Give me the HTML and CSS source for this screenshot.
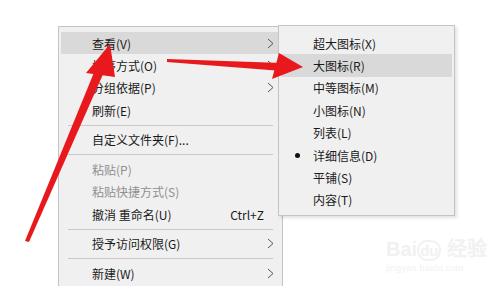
FILE: index.html
```html
<!DOCTYPE html>
<html lang="zh-CN">
<head>
  <meta charset="UTF-8">
  <title>查看菜单</title>
  <link rel="stylesheet" href="styles.css">
</head>
<body>
  <div class="screen">
    <div class="menu main">
      <div class="item hover"><span class="mark"></span><span class="label">查看(V)</span><span class="more"><svg width="7" height="11" viewBox="0 0 7 11"><path d="M1 1 L6 5.5 L1 10" /></svg></span></div>
      <div class="item"><span class="mark"></span><span class="label">排序方式(O)</span><span class="more"><svg width="7" height="11" viewBox="0 0 7 11"><path d="M1 1 L6 5.5 L1 10" /></svg></span></div>
      <div class="item"><span class="mark"></span><span class="label">分组依据(P)</span><span class="more"><svg width="7" height="11" viewBox="0 0 7 11"><path d="M1 1 L6 5.5 L1 10" /></svg></span></div>
      <div class="item"><span class="mark"></span><span class="label">刷新(E)</span><span class="more"></span></div>
      <div class="sep"></div>
      <div class="item"><span class="mark"></span><span class="label">自定义文件夹(F)...</span><span class="more"></span></div>
      <div class="sep"></div>
      <div class="item disabled"><span class="mark"></span><span class="label">粘贴(P)</span><span class="more"></span></div>
      <div class="item disabled"><span class="mark"></span><span class="label">粘贴快捷方式(S)</span><span class="more"></span></div>
      <div class="item"><span class="mark"></span><span class="label">撤消 重命名(U)</span><span class="key">Ctrl+Z</span><span class="more"></span></div>
      <div class="sep"></div>
      <div class="item"><span class="mark"></span><span class="label">授予访问权限(G)</span><span class="more"><svg width="7" height="11" viewBox="0 0 7 11"><path d="M1 1 L6 5.5 L1 10" /></svg></span></div>
      <div class="sep"></div>
      <div class="item"><span class="mark"></span><span class="label">新建(W)</span><span class="more"><svg width="7" height="11" viewBox="0 0 7 11"><path d="M1 1 L6 5.5 L1 10" /></svg></span></div>
    </div>

    <div class="menu sub">
      <div class="item"><span class="mark"></span><span class="label">超大图标(X)</span></div>
      <div class="item hover"><span class="mark"></span><span class="label">大图标(R)</span></div>
      <div class="item"><span class="mark"></span><span class="label">中等图标(M)</span></div>
      <div class="item"><span class="mark"></span><span class="label">小图标(N)</span></div>
      <div class="item"><span class="mark"></span><span class="label">列表(L)</span></div>
      <div class="item"><span class="mark"><i class="dot"></i></span><span class="label">详细信息(D)</span></div>
      <div class="item"><span class="mark"></span><span class="label">平铺(S)</span></div>
      <div class="item"><span class="mark"></span><span class="label">内容(T)</span></div>
    </div>

    <div class="watermark">
      <div class="wm-logo">Bai<span class="paw">du</span> 经验</div>
      <div class="wm-site">jingyan.baidu.com</div>
    </div>

    <!-- red annotation arrows drawn over the screenshot -->
    <svg class="arrows" width="500" height="286" viewBox="0 0 500 286">
      <polygon points="95,70 104,72 29,242 25,241" />
      <polygon points="110,44 86,73 115,77" />
      <polygon points="167,59 167,62 282,71 282,63" />
      <polygon points="303,67 279,53 272,79" />
    </svg>
  </div>
</body>
</html>
```

FILE: styles.css
```css
body {
  margin: 0;
  background-color: #fff;
  font-family: "Noto Sans CJK SC", "Microsoft YaHei", sans-serif;
  font-size: 12px;
  color: #1a1a1a;
}
.screen {
  width: 500px;
  height: 286px;
  position: relative;
  overflow: hidden;
  box-sizing: border-box;
  padding: 26px 0 0 58px;
  display: flex;
  align-items: flex-start;
}
.menu {
  background-color: #f0f0f0;
  border: 1px solid #c4c4c4;
  box-sizing: border-box;
  padding: 5px 2px 10px 2px;
}
.main {
  width: 225px;
  flex-shrink: 0;
}
.sub {
  width: 177px;
  flex-shrink: 0;
  margin-left: -5px;
  margin-top: -1px;
  padding: 6px 2px 4px 2px;
  box-shadow: 2px 2px 3px rgba(0, 0, 0, 0.12);
  position: relative;
}
.item {
  height: 22.4px;
  display: flex;
  align-items: center;
  white-space: nowrap;
}
.item.hover {
  background-color: #d9d9d9;
}
.item.disabled {
  color: #8f8f8f;
}
.mark {
  width: 31px;
  flex-shrink: 0;
  display: flex;
  justify-content: center;
}
.sub .mark {
  width: 32px;
}
.label {
  flex: 1;
}
.more {
  width: 16px;
  flex-shrink: 0;
  display: flex;
  align-items: center;
  padding-left: 3px;
  box-sizing: border-box;
}
.more svg path {
  fill: none;
  stroke: #555;
  stroke-width: 1;
}
.sep {
  height: 7.2px;
  display: flex;
  align-items: center;
  padding: 0 7px;
}
.sep::before {
  content: "";
  flex: 1;
  height: 1px;
  background-color: #c8c8c8;
}
.dot {
  width: 5px;
  height: 5px;
  border-radius: 50%;
  background-color: #111;
}
.watermark {
  position: absolute;
  left: 386px;
  top: 238px;
  color: #f1f1f1;
  font-family: "Liberation Sans", Arial, sans-serif;
}
.wm-logo {
  font-size: 20px;
  font-weight: bold;
  line-height: 22px;
}
.paw {
  font-size: 15px;
  border: 2px solid #f1f1f1;
  border-radius: 10px;
  padding: 0 1px;
}
.wm-site {
  font-size: 9px;
  line-height: 12px;
  letter-spacing: 0.3px;
}
.arrows {
  position: absolute;
  left: 0;
  top: 0;
}
.arrows polygon {
  fill: #e8191c;
}
```
